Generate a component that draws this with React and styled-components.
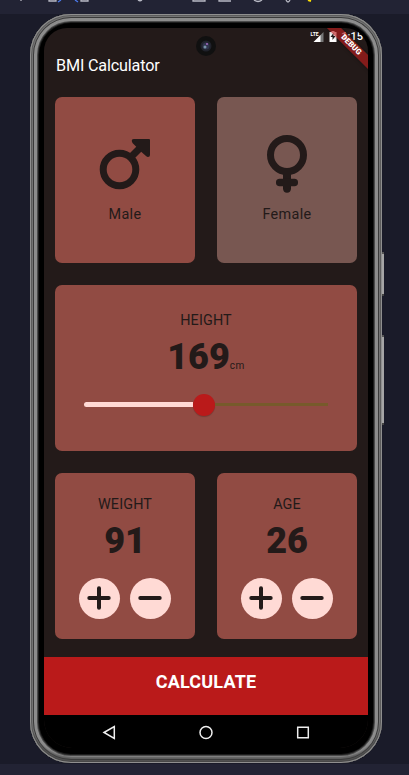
import React from 'react';
import styled, { createGlobalStyle } from 'styled-components';

const Global = createGlobalStyle`
  * { box-sizing: border-box; }
  body { margin: 0; background: #1a1b29; font-family: Roboto, sans-serif; color: #231a19; }
  svg { display: block; }
`;

const Desktop = styled.div`
  width: 409px;
  height: 775px;
  overflow: hidden;
  position: relative;
  display: flex;
  flex-direction: column;
`;
const ToolStrip = styled.div`
  height: 14px;
  background: #222334;
`;
const BottomStrip = styled.div`
  height: 11px;
  margin-top: auto;
  background: #222334;
`;
const PhoneFrame = styled.main`
  position: absolute;
  left: 30px;
  top: 14px;
  width: 352px;
  height: 749px;
  border-radius: 41px;
  background: #000;
  padding: 14px;
  box-shadow: inset 0 0 0 1px #8f8f8f, inset 0 -7px 2px -1px #3c3c3ca0, inset 0 0 0 2px #5c5c5c,
    inset 0 0 0 3px #747474, inset 0 0 0 4px #3a3a3a, inset 0 0 0 7px #8c8c8c, inset 0 0 0 8px #4a4a4a,
    inset 0 0 0 9px #1c1c1c;
`;
const SideButton = styled.div`
  position: absolute;
  left: 382px;
  top: ${(p) => p.$top}px;
  width: 2px;
  height: ${(p) => p.$height}px;
  background: #a5a5a5;
  border-top: 2px solid #555;
  border-bottom: 2px solid #444;
`;
const Screen = styled.div`
  position: relative;
  width: 324px;
  height: 720px;
  border-radius: 23px 23px 28px 28px;
  overflow: hidden;
  background: #231a19;
  display: flex;
  flex-direction: column;
`;
const StatusBar = styled.div`
  height: 18px;
  display: flex;
  justify-content: flex-end;
  align-items: center;
  padding-right: 5px;
`;
const Clock = styled.span`
  color: #fff;
  font-size: 11px;
  font-weight: 500;
  line-height: 18px;
`;
const Camera = styled.svg`
  position: absolute;
  left: 151px;
  top: 7px;
`;
const DebugRibbon = styled.div`
  position: absolute;
  right: -23px;
  top: 12px;
  width: 80px;
  height: 10px;
  background: rgba(183, 28, 28, .65);
  color: #fff;
  font-size: 7.8px;
  font-weight: 900;
  line-height: 10px;
  text-align: center;
  transform: rotate(45deg);
  box-shadow: 0 0 4px #0006;
`;
const AppBar = styled.header`
  height: 51px;
  padding: 8px 12px;
  color: #fff;
  font-size: 16.2px;
  line-height: 23px;
  letter-spacing: -.17px;
`;
const Cards = styled.div`
  display: grid;
  grid-template-columns: 140px 140px;
  grid-auto-rows: 166px;
  gap: 22px;
  padding: 0 11px;
  height: 560px;
`;
const Card = styled.section`
  background: ${(p) => (p.$muted ? '#785751' : '#914b43')};
  border-radius: 7px;
  display: flex;
  flex-direction: column;
  align-items: center;
  grid-column: ${(p) => (p.$wide ? 'span 2' : 'auto')};
  padding-top: ${(p) => p.$top}px;
`;
const GenderLabel = styled.span`
  font-size: 14.4px;
  line-height: 20px;
  letter-spacing: .35px;
  margin-top: 11px;
`;
const Label = styled.span`
  font-size: 14.4px;
  line-height: 20px;
  letter-spacing: .15px;
`;
const ValueRow = styled.div`
  display: flex;
  align-items: baseline;
  height: 44px;
  margin-top: 4px;
`;
const Value = styled.span`
  font-size: 36px;
  font-weight: 900;
  line-height: 44px;
`;
const Unit = styled.span`
  font-size: 10px;
  letter-spacing: .5px;
`;
const Slider = styled.div`
  display: flex;
  align-items: center;
  width: 244px;
  height: 22px;
  margin-top: 14.5px;
`;
const ActiveTrack = styled.div`
  width: 109px;
  height: 5px;
  border-radius: 3px 0 0 3px;
  background: #ffdad5;
`;
const Thumb = styled.div`
  width: 22px;
  height: 22px;
  border-radius: 50%;
  background: #ba1a1a;
  box-shadow: 0 1px 1px #0003;
`;
const InactiveTrack = styled.div`
  flex: 1;
  height: 3px;
  background: #775a2b;
`;
const Buttons = styled.div`
  display: flex;
  gap: 10px;
  margin-top: 15px;
`;
const RoundButton = styled.button`
  width: 41px;
  height: 41px;
  border: 0;
  border-radius: 50%;
  padding: 0 1px 1px 0;
  display: grid;
  place-items: center;
  background: #ffdad5;
`;
const Calculate = styled.button`
  height: 58px;
  border: 0;
  background: #ba1a1a;
  color: #fff;
  font: 700 18px/24px Roboto, sans-serif;
  letter-spacing: .2px;
  padding: 0 0 8px;
`;
const NavBar = styled.nav`
  flex: 1;
  background: #000;
`;

const GenderIcon = ({ female }) => (
  <svg width="58" height="60" viewBox="0 0 58 60" fill="none" stroke="#231a19">
    {female ? (
      <>
        <circle cx="29" cy="21" r="16.5" strokeWidth="7" />
        <path d="M29 38v17.5" strokeWidth="8" strokeLinecap="butt" />
        <path d="M21.7 48.4h14.6M29 48v7" strokeWidth="7.5" strokeLinecap="round" />
      </>
    ) : (
      <>
        <circle cx="23.5" cy="35.5" r="16.3" strokeWidth="7" />
        <path d="M34 24l10-10" strokeWidth="7" />
        <path d="M38 5H53Q54 5 54 6V21Q54 23 52 23Q51 23 50 22L46 18.5L40 12.5L36.5 9Q34.5 5 38 5z" fill="#231a19" stroke="none" />
      </>
    )}
  </svg>
);

const StepIcon = ({ plus }) => (
  <svg width="24" height="24" fill="none" stroke="#231a19" strokeWidth="4" strokeLinecap="round">
    <path d={plus ? 'M2.3 12h19.4M12 2.2v19.6' : 'M2.3 12h19.4'} />
  </svg>
);

const Counter = ({ label, value }) => (
  <Card $top={22}>
    <Label>{label}</Label>
    <ValueRow><Value>{value}</Value></ValueRow>
    <Buttons>
      <RoundButton aria-label={`Increase ${label}`}><StepIcon plus /></RoundButton>
      <RoundButton aria-label={`Decrease ${label}`}><StepIcon /></RoundButton>
    </Buttons>
  </Card>
);

export default function App() {
  return (
    <Desktop>
      <Global />
      <ToolStrip>
        <svg width="409" height="14" fill="none" stroke="#b9bac5" strokeWidth="1.3">
          <path d="M21 0v1M49 0v1h7V0M81 0v1h7V0M138 0q2 1.5 4 0M193 0v1h12V0M219 0v1h12M254 0q4 3 8 0M286 0q2 4 4 0" />
          <path d="M58 2l3-2M75 0l3 2" stroke="#4b79ed" />
          <path d="M308 0l3 1" stroke="#ffe000" strokeWidth="2" />
        </svg>
      </ToolStrip>
      <BottomStrip />
      <SideButton $top={252} $height={44} />
      <SideButton $top={335} $height={90} />
      <PhoneFrame>
        <Screen>
          <StatusBar>
            <svg width="31" height="18">
              <text x="0.5" y="8" fontFamily="Roboto" fontSize="5" fontWeight="700" fill="#fff">LTE</text>
              <path d="M10 7.5L13.5 4v10H10z" fill="#777" />
              <path d="M3.5 14l7-7v7z" fill="#fff" />
              <path d="M19.5 4h2V3h3v1h2v10h-7z" fill="#fff" />
              <path d="M23.5 5l-3 4h2v3l3-4h-2z" fill="#231a19" />
            </svg>
            <Clock>1:15</Clock>
          </StatusBar>
          <AppBar>BMI Calculator</AppBar>
          <Cards>
            <Card $top={37}><GenderIcon /><GenderLabel>Male</GenderLabel></Card>
            <Card $top={37} $muted><GenderIcon female /><GenderLabel>Female</GenderLabel></Card>
            <Card $top={26} $wide>
              <Label>HEIGHT</Label>
              <ValueRow><Value>169</Value><Unit>cm</Unit></ValueRow>
              <Slider><ActiveTrack /><Thumb /><InactiveTrack /></Slider>
            </Card>
            <Counter label="WEIGHT" value="91" />
            <Counter label="AGE" value="26" />
          </Cards>
          <Calculate>CALCULATE</Calculate>
          <NavBar>
            <svg width="324" height="33" fill="none" stroke="#eee" strokeWidth="1.5">
              <path d="M60 17.5l10.3-6v12z" />
              <circle cx="162" cy="17.5" r="6" />
              <path d="M253.7 12.2h10.6v10.6h-10.6z" />
            </svg>
          </NavBar>
          <Camera width="22" height="22">
            <circle cx="11" cy="11" r="10" fill="#101010" />
            <circle cx="11" cy="11" r="5.5" fill="#20222b" />
            <circle cx="11" cy="11" r="3.5" fill="#30354d" />
            <circle cx="10" cy="12" r="1.5" fill="#7791a8" />
            <circle cx="12" cy="9" r="1" fill="#a56ac3" />
          </Camera>
          <DebugRibbon>DEBUG</DebugRibbon>
        </Screen>
      </PhoneFrame>
    </Desktop>
  );
}
